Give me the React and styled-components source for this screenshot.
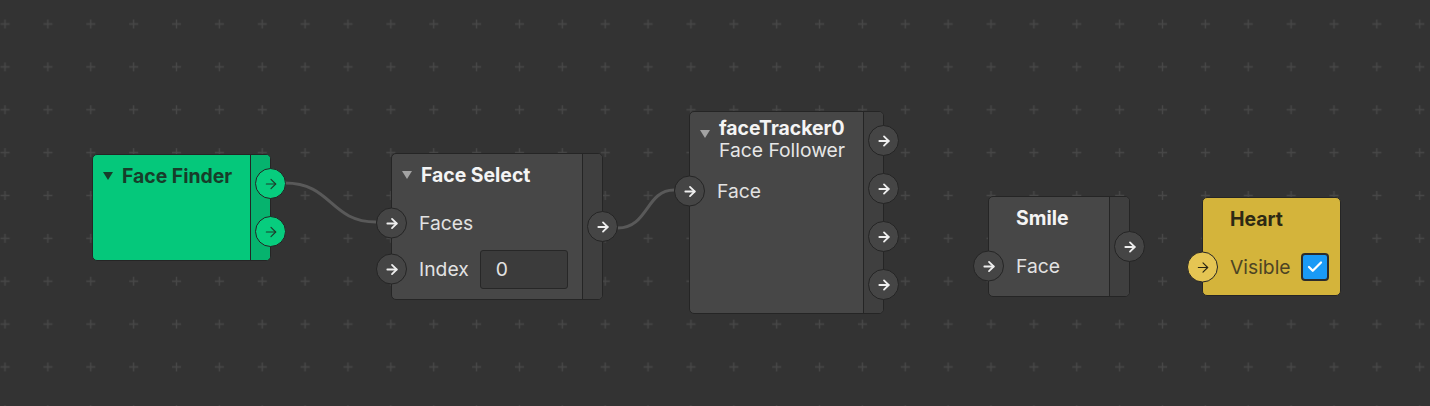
import React from "react";
import styled, { createGlobalStyle } from "styled-components";

const GlobalStyle = createGlobalStyle`
  html, body {
    margin: 0;
    padding: 0;
    background: #333333;
  }
  body {
    font-family: Inter, "Noto Sans", "Liberation Sans", sans-serif;
  }
`;

const tones = {
  grey: {
    main: "#474747",
    strip: "#3f3f3f",
    title: "#f4f4f4",
    text: "#e2e2e2",
    tri: "#a3a3a3",
    port: "#454545",
    arrow: "#eeeeee",
  },
  green: {
    main: "#05c87b",
    strip: "#06b36e",
    title: "#173d2a",
    text: "#173d2a",
    tri: "#173d2a",
    port: "#07cd7e",
    arrow: "#1d3b2b",
  },
  yellow: {
    main: "#d4b43b",
    strip: "#c6a834",
    title: "#2d2914",
    text: "#4d4424",
    tri: "#2d2914",
    port: "#e5c553",
    arrow: "#2a2612",
  },
};

const nodes = [
  {
    id: "finder",
    tone: "green",
    x: 92, y: 154, w: 179, h: 107,
    title: "Face Finder",
    triangle: true,
    inputs: [],
    outputs: 2,
  },
  {
    id: "select",
    tone: "grey",
    x: 391, y: 153, w: 212, h: 147,
    title: "Face Select",
    triangle: true,
    inputs: [{ label: "Faces" }, { label: "Index", field: "0" }],
    outputs: 1,
  },
  {
    id: "tracker",
    tone: "grey",
    x: 689, y: 111, w: 195, h: 203,
    title: "faceTracker0",
    subtitle: "Face Follower",
    triangle: true,
    inputs: [{ label: "Face" }],
    outputs: 4,
  },
  {
    id: "smile",
    tone: "grey",
    x: 988, y: 196, w: 142, h: 101,
    title: "Smile",
    inputs: [{ label: "Face" }],
    outputs: 1,
  },
  {
    id: "heart",
    tone: "yellow",
    x: 1202, y: 197, w: 139, h: 99,
    title: "Heart",
    inputs: [{ label: "Visible", check: true }],
    outputs: 0,
  },
];

const edges = [
  "M285 183 C 332 183, 330 222, 376 222",
  "M618 228 C 648 228, 646 190, 674 190",
];

const Arrow = ({ color, weight }) => (
  <svg width="16" height="16" viewBox="0 0 24 24" fill="none" stroke={color} strokeWidth={weight} strokeLinecap="round" strokeLinejoin="round">
    <path d="M5 12h14" />
    <path d="m12 5 7 7-7 7" />
  </svg>
);

const Port = ({ tone }) => (
  <PortDot $tone={tone}>
    <Arrow color={tones[tone].arrow} weight={tone === "grey" ? 2.7 : 1.7} />
  </PortDot>
);

const GridBackdrop = () => (
  <Backdrop width="1430" height="406">
    <defs>
      <pattern id="plus" patternUnits="userSpaceOnUse" width="42.87" height="42.87" x="-16.43" y="2.57">
        <path d="M17 21.43h9M21.43 17v9" stroke="#474747" strokeWidth="1.4" />
      </pattern>
    </defs>
    <rect width="1430" height="406" fill="url(#plus)" />
  </Backdrop>
);

const Wires = () => (
  <Backdrop width="1430" height="406">
    {edges.map((d, i) => (
      <path key={i} d={d} fill="none" stroke="#595959" strokeWidth="3" />
    ))}
  </Backdrop>
);

const NodeBox = ({ node }) => {
  const { tone } = node;
  return (
    <Node $tone={tone} style={{ left: node.x, top: node.y, width: node.w, height: node.h }}>
      <Main $tone={tone}>
        <Header $tight={!!node.subtitle} $indent={!node.triangle}>
          {node.triangle && <Triangle $tone={tone} $low={!!node.subtitle} />}
          <Titles>
            <Title $tone={tone}>{node.title}</Title>
            {node.subtitle && <Subtitle>{node.subtitle}</Subtitle>}
          </Titles>
        </Header>
        {node.inputs.map((input) => (
          <Row key={input.label}>
            <InPort>
              <Port tone={tone} />
            </InPort>
            <Label $tone={tone}>{input.label}</Label>
            {input.field && <Field>{input.field}</Field>}
            {input.check && (
              <Check>
                <svg width="18" height="18" viewBox="0 0 24 24" fill="none" stroke="#ffffff" strokeWidth="3" strokeLinecap="round" strokeLinejoin="round">
                  <path d="M20 6 9 17l-5-5" />
                </svg>
              </Check>
            )}
          </Row>
        ))}
      </Main>
      {node.outputs > 0 && (
        <Strip $tone={tone}>
          {Array.from({ length: node.outputs }).map((_, i) => (
            <OutPort key={i}>
              <Port tone={tone} />
            </OutPort>
          ))}
        </Strip>
      )}
    </Node>
  );
};

export default function App() {
  return (
    <>
      <GlobalStyle />
      <Canvas>
        <GridBackdrop />
        <Wires />
        {nodes.map((n) => (
          <NodeBox key={n.id} node={n} />
        ))}
      </Canvas>
    </>
  );
}

const Canvas = styled.div`
  position: relative;
  width: 1430px;
  height: 406px;
  overflow: hidden;
  background: #333333;
`;

const Backdrop = styled.svg`
  position: absolute;
  left: 0;
  top: 0;
`;

const Node = styled.div`
  position: absolute;
  box-sizing: border-box;
  display: flex;
  border: 1px solid #252525;
  border-radius: 5px;
  background: ${({ $tone }) => tones[$tone].main};
`;

const Main = styled.div`
  flex: 1;
  display: flex;
  flex-direction: column;
  border-radius: 4px 0 0 4px;
`;

const Header = styled.div`
  display: flex;
  align-items: flex-start;
  gap: 9px;
  padding: ${({ $tight }) => ($tight ? "5px 10px 7px" : "10px 10px 14px")};
  padding-left: ${({ $indent }) => ($indent ? "27px" : "10px")};
`;

const Triangle = styled.span`
  width: 0;
  height: 0;
  margin-top: ${({ $low }) => ($low ? "13px" : "7px")};
  border-left: 5.5px solid transparent;
  border-right: 5.5px solid transparent;
  border-top: 8px solid ${({ $tone }) => tones[$tone].tri};
`;

const Titles = styled.div`
  display: flex;
  flex-direction: column;
`;

const Title = styled.div`
  font-size: 19.4px;
  line-height: 22px;
  font-weight: 700;
  color: ${({ $tone }) => tones[$tone].title};
`;

const Subtitle = styled.div`
  font-size: 19.3px;
  line-height: 22px;
  color: #e6e6e6;
`;

const Row = styled.div`
  position: relative;
  display: flex;
  align-items: center;
  gap: 10px;
  height: 46px;
  padding-left: 27px;
`;

const InPort = styled.div`
  position: absolute;
  left: -16px;
  top: 50%;
  transform: translateY(-50%);
`;

const PortDot = styled.div`
  box-sizing: border-box;
  width: 31px;
  height: 31px;
  border-radius: 50%;
  border: 1.5px solid #252525;
  background: ${({ $tone }) => tones[$tone].port};
  display: flex;
  align-items: center;
  justify-content: center;
`;

const Label = styled.span`
  font-size: 19.3px;
  line-height: 22px;
  color: ${({ $tone }) => tones[$tone].text};
`;

const Field = styled.div`
  box-sizing: border-box;
  width: 88px;
  height: 39px;
  margin-left: 1px;
  padding: 0 15px;
  display: flex;
  align-items: center;
  background: #3b3b3b;
  border: 1px solid #272727;
  border-radius: 3px;
  font-size: 19.3px;
  color: #e2e2e2;
`;

const Check = styled.div`
  box-sizing: border-box;
  width: 28px;
  height: 28px;
  border-radius: 4px;
  border: 2px solid #2c2c2c;
  background: #1a9af6;
  display: flex;
  align-items: center;
  justify-content: center;
`;

const Strip = styled.div`
  width: 19px;
  display: flex;
  flex-direction: column;
  justify-content: center;
  align-items: flex-end;
  gap: 17px;
  border-left: 1px solid #252525;
  border-radius: 0 4px 4px 0;
  background: ${({ $tone }) => tones[$tone].strip};
`;

const OutPort = styled.div`
  margin-right: -16px;
`;
